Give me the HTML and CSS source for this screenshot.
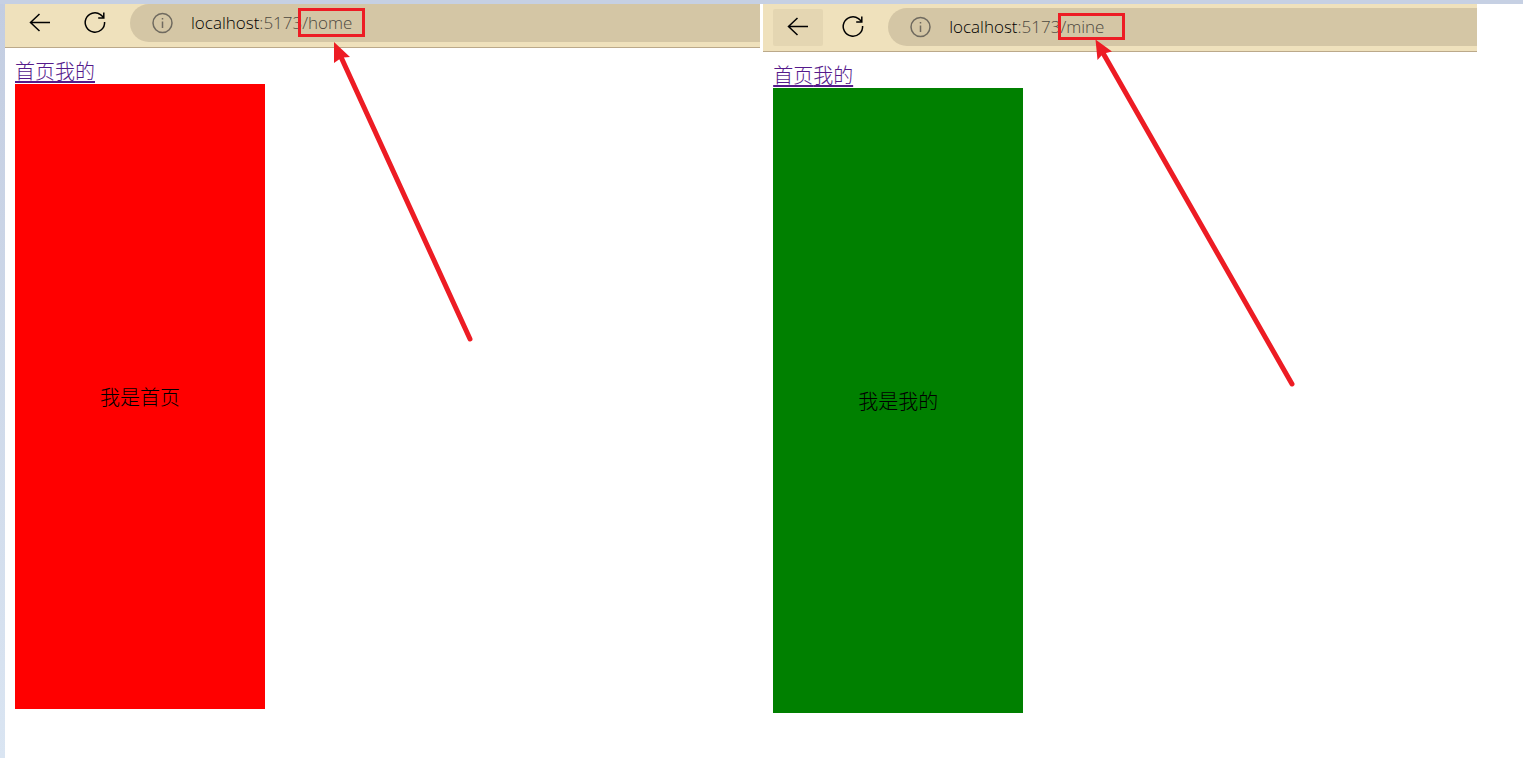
FILE: index.html
```html
<!DOCTYPE html>
<html lang="zh-CN">
<head>
<meta charset="utf-8">
<title>首页 / 我的</title>
<link rel="stylesheet" href="styles.css">
</head>
<body>
<svg class="symbols" aria-hidden="true">
  <symbol id="back" viewBox="0 0 24 24"><path d="M22 11.500H2.500M11.500 3L2.500 11.500l9 8.500"/></symbol>
  <symbol id="reload" viewBox="0 0 24 24"><path d="M21.600 11A9.700 9.700 0 1 1 17.500 3.600L20.500 6.300M20.800 1.500v5.500H15.200"/></symbol>
  <symbol id="info" viewBox="0 0 24 24"><circle cx="12.500" cy="12" r="9.500"/><path d="M12.500 10.500v6.500M12.500 7v1.500"/></symbol>
</svg>
<main class="board">
  <section class="pane pane-home">
    <header class="toolbar">
      <button class="tool" aria-label="Back"><svg class="icon"><use href="#back"/></svg></button>
      <button class="tool" aria-label="Reload"><svg class="icon"><use href="#reload"/></svg></button>
      <div class="address">
        <button class="site-info" aria-label="Site information"><svg class="icon"><use href="#info"/></svg></button>
        <div class="url" role="textbox" aria-label="Address" contenteditable="true" spellcheck="false"><span class="host">localhost</span>:5173/home</div>
      </div>
    </header>
    <div class="page">
      <nav class="links"><a href="#home">首页</a><a href="#mine">我的</a></nav>
      <div class="view view-home">我是首页</div>
    </div>
  </section>
  <section class="pane pane-mine">
    <header class="toolbar">
      <button class="tool tool-active" aria-label="Back"><svg class="icon"><use href="#back"/></svg></button>
      <button class="tool" aria-label="Reload"><svg class="icon"><use href="#reload"/></svg></button>
      <div class="address">
        <button class="site-info" aria-label="Site information"><svg class="icon"><use href="#info"/></svg></button>
        <div class="url" role="textbox" aria-label="Address" contenteditable="true" spellcheck="false"><span class="host">localhost</span>:5173/mine</div>
      </div>
    </header>
    <div class="page">
      <nav class="links"><a href="#home">首页</a><a href="#mine">我的</a></nav>
      <div class="view view-mine">我是我的</div>
    </div>
  </section>
  <svg class="marks" aria-hidden="true">
    <rect x="299.500" y="9.500" width="64" height="26"/>
    <path d="M341 57L470 339"/>
    <path class="head" d="M334 42L350 57L343.500 57.500L339 59.500L334 63z"/>
    <rect x="1059.500" y="14.500" width="64" height="24"/>
    <path d="M1103 53L1292 384"/>
    <path class="head" d="M1095.500 39.500L1112 51.500L1106 53L1101.500 55.500L1097.500 60z"/>
  </svg>
</main>
</body>
</html>
```
FILE: styles.css
```css
* {
  box-sizing: border-box;
}

body {
  margin: 0;
  background: #fff;
  color: #000;
  font-family: "Noto Sans CJK SC", sans-serif;
  font-size: 20px;
  font-weight: 300;
}

button {
  padding: 0;
  border: 0;
  background: none;
  color: inherit;
}

.symbols {
  position: absolute;
  width: 0;
  height: 0;
}

.board {
  position: relative;
  display: flex;
  gap: 3px;
  min-height: 100vh;
  padding: 4px 3% 0 5px;
  background:
    linear-gradient(#c6d0e3, #c6d0e3) top / 100% 4px no-repeat,
    linear-gradient(#c3cde1, #dae5f2) left / 5px 100% no-repeat;
}

.pane {
  flex: 714 1 0;
  min-width: 0;
}

.pane-home {
  flex-grow: 755;
}

.toolbar {
  display: flex;
  align-items: center;
  gap: 5px;
  padding: 0 0 5px 10px;
  border-bottom: 1px solid #bba98a;
  background: #efe1bc;
}

.pane-mine .toolbar {
  padding-top: 4px;
}

.tool {
  display: grid;
  place-items: center;
  width: 50px;
  height: 37px;
  border-radius: 2px;
}

.tool-active {
  background: #e4d6b2;
}

.icon {
  width: 24px;
  height: 24px;
  fill: none;
  stroke: currentColor;
  stroke-width: 1.5px;
}

.address {
  display: flex;
  flex: 1;
  align-items: center;
  gap: 17px;
  height: 38px;
  margin-left: 5px;
  padding-left: 20px;
  border-radius: 19px 0 0 19px;
  background: #d4c6a5;
}

.site-info {
  display: grid;
  color: #6f6a5f;
}

.url {
  color: #4c4840;
  font-family: "Open Sans", "Noto Sans", sans-serif;
  font-size: 17px;
  line-height: 24px;
  white-space: nowrap;
}

.host {
  color: #000;
}

.page {
  padding: 10px;
}

.links {
  line-height: 26px;
}

.links a {
  color: #551a8b;
  text-decoration-thickness: 2px;
  text-underline-offset: 2px;
}

.view {
  display: grid;
  place-items: center;
  width: 250px;
  height: 625px;
}

.view-home {
  background: #f00;
}

.view-mine {
  background: #008000;
}

.marks {
  position: absolute;
  inset: 0;
  width: 100%;
  height: 100%;
  fill: none;
  stroke: #ed1c24;
  stroke-width: 3px;
  pointer-events: none;
}

.marks path {
  stroke-width: 5px;
  stroke-linecap: round;
}

.marks .head {
  fill: #ed1c24;
  stroke: none;
}
```
